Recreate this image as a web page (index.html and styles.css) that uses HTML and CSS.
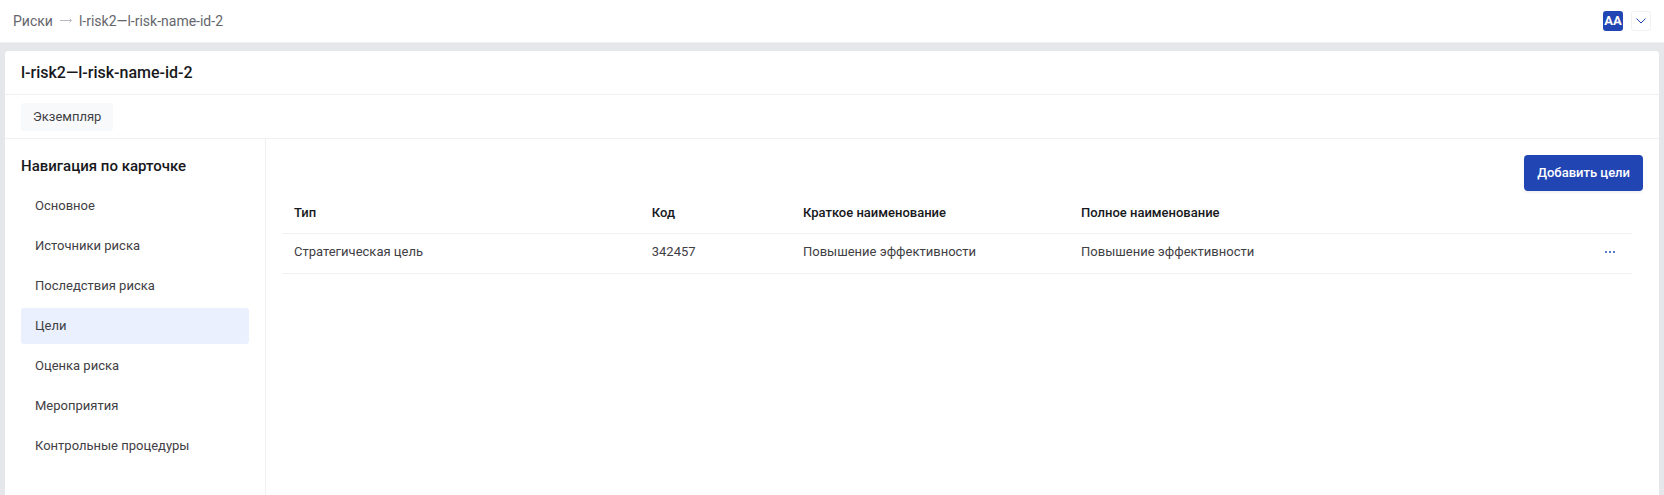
FILE: index.html
```html
<!DOCTYPE html>
<html lang="ru">
<head>
  <meta charset="UTF-8" />
  <meta name="viewport" content="width=device-width, initial-scale=1.0" />
  <title>l-risk2—l-risk-name-id-2</title>
  <link rel="stylesheet" href="styles.css">
</head>
<body>
  <header class="topbar">
    <nav class="breadcrumbs">
      <a href="#">Риски</a>
      <svg class="crumb-arrow" width="12" height="6" viewBox="0 0 12 6">
        <path d="M0 2.5h11.5M9.5 0.5L11.5 2.5L9.5 4.5" />
      </svg>
      <a href="#">l-risk2—l-risk-name-id-2</a>
    </nav>
    <div class="user">
      <span class="avatar">AA</span>
      <button class="user-toggle" aria-label="Меню пользователя">
        <svg width="10" height="6" viewBox="0 0 10 6">
          <path d="M0.5 0.5L5 5L9.5 0.5" />
        </svg>
      </button>
    </div>
  </header>

  <main class="card">
    <h1 class="card-title">l-risk2—l-risk-name-id-2</h1>

    <div class="tabs">
      <button class="tab">Экземпляр</button>
    </div>

    <div class="card-body">
      <nav class="sidebar">
        <h2 class="sidebar-title">Навигация по карточке</h2>
        <a class="nav-item" href="#">Основное</a>
        <a class="nav-item" href="#">Источники риска</a>
        <a class="nav-item" href="#">Последствия риска</a>
        <a class="nav-item active" href="#">Цели</a>
        <a class="nav-item" href="#">Оценка риска</a>
        <a class="nav-item" href="#">Мероприятия</a>
        <a class="nav-item" href="#">Контрольные процедуры</a>
      </nav>

      <section class="content">
        <div class="toolbar">
          <button class="btn-primary">Добавить цели</button>
        </div>
        <div class="table-wrap">
          <table class="goals">
            <thead>
              <tr>
                <th class="col-type">Тип</th>
                <th class="col-code">Код</th>
                <th class="col-short">Краткое наименование</th>
                <th>Полное наименование</th>
                <th class="col-actions"></th>
              </tr>
            </thead>
            <tbody>
              <tr>
                <td>Стратегическая цель</td>
                <td>342457</td>
                <td>Повышение эффективности</td>
                <td>Повышение эффективности</td>
                <td class="col-actions">
                  <button class="row-menu" aria-label="Действия">
                    <svg width="10" height="2" viewBox="0 0 10 2">
                      <path d="M0 0h2v2h-2zM4 0h2v2h-2zM8 0h2v2h-2z" />
                    </svg>
                  </button>
                </td>
              </tr>
            </tbody>
          </table>
        </div>
      </section>
    </div>
  </main>
</body>
</html>
```

FILE: styles.css
```css
:root {
  --page-bg: #e6e7eb;
  --line: #f0f0f1;
  --text: #3f4045;
  --heading: #17181c;
  --muted: #65666c;
  --accent: #2146b4;
}
* {
  box-sizing: border-box;
}
body {
  display: flex;
  flex-direction: column;
  min-height: 100vh;
  margin: 0;
  font-family: Roboto, "Noto Sans", sans-serif;
  font-size: 13px;
  line-height: 20px;
  background: var(--page-bg);
  color: var(--text);
}
a {
  color: inherit;
  text-decoration: none;
}
button {
  font: inherit;
  color: inherit;
  border: none;
  cursor: pointer;
}

/* top bar */
.topbar {
  display: flex;
  align-items: center;
  justify-content: space-between;
  height: 43px;
  padding: 0 13px;
  background: #fff;
  border-bottom: 1px solid #eff0f2;
}
.breadcrumbs {
  display: flex;
  align-items: center;
  gap: 7px;
  color: var(--muted);
  font-size: 14px;
}
.crumb-arrow {
  fill: none;
  stroke: #b9babf;
}
.user {
  display: flex;
  align-items: center;
  gap: 8px;
}
.avatar {
  width: 20px;
  border-radius: 3px;
  background: var(--accent);
  color: #fff;
  font-weight: 700;
  text-align: center;
}
.user-toggle {
  display: flex;
  align-items: center;
  justify-content: center;
  width: 20px;
  height: 20px;
  padding: 0;
  border: 1px solid #f0f1f4;
  border-radius: 3px;
  background: #fff;
}
.user-toggle svg {
  fill: none;
  stroke: var(--accent);
}

/* card */
.card {
  display: flex;
  flex: 1;
  flex-direction: column;
  margin: 8px 5px 0;
  border-radius: 3px 3px 0 0;
  background: #fff;
}
.card-title {
  margin: 0;
  padding: 12px 16px 11px;
  border-bottom: 1px solid var(--line);
  color: var(--heading);
  font-size: 16px;
  font-weight: 500;
}
.tabs {
  padding: 8px 16px 7px;
  border-bottom: 1px solid var(--line);
}
.tab {
  display: block;
  height: 28px;
  padding: 0 12px;
  border-radius: 3px;
  background: #f8f9fb;
}
.card-body {
  display: flex;
  flex: 1;
}

/* side navigation */
.sidebar {
  display: flex;
  flex-direction: column;
  gap: 4px;
  width: 261px;
  padding: 17px 16px;
  border-right: 1px solid var(--line);
}
.sidebar-title {
  margin: 0 0 8px;
  color: var(--heading);
  font-size: 15px;
  font-weight: 500;
}
.nav-item {
  padding: 8px 14px;
  border-radius: 3px;
}
.nav-item.active {
  background: #eaf0fe;
}

/* content */
.content {
  flex: 1;
  padding: 16px;
}
.toolbar {
  display: flex;
  justify-content: flex-end;
}
.btn-primary {
  height: 36px;
  padding: 0 13px;
  border-radius: 4px;
  background: var(--accent);
  color: #fff;
  font-weight: 500;
  box-shadow: 0 2px 2px rgba(0, 0, 0, 0.05);
}
.table-wrap {
  padding-right: 11px;
}
.goals {
  width: 100%;
  border-collapse: collapse;
}
.goals th,
.goals td {
  padding: 8px 12px 11px;
  border-bottom: 1px solid var(--line);
  text-align: left;
}
.goals th {
  padding-top: 12px;
  padding-bottom: 10px;
  color: var(--heading);
  font-weight: 500;
}
.col-type {
  width: 26.5%;
}
.col-code {
  width: 11.2%;
}
.col-short {
  width: 20.6%;
}
.goals .col-actions {
  width: 60px;
  text-align: right;
}
.row-menu {
  display: inline-flex;
  align-items: center;
  height: 20px;
  padding: 0 5px;
  background: none;
  vertical-align: top;
}
.row-menu svg {
  fill: #5b7bc4;
}
```
